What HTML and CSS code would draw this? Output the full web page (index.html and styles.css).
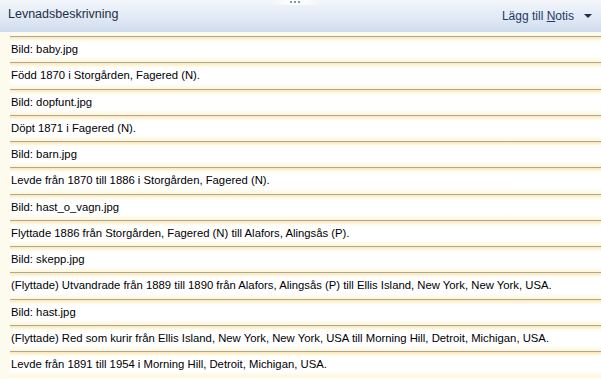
FILE: index.html
```html
<!doctype html>
<html lang="sv">
    <head>
        <meta charset="UTF-8" />
        <title>Levnadsbeskrivning</title>
        <link rel="stylesheet" href="styles.css">
    </head>
    <body>
        <div class="panel">
            <div class="header">
                <span class="grip"><i></i><i></i><i></i></span>
                <span class="title">Levnadsbeskrivning</span>
                <span class="add"><span>Lägg till <u>N</u>otis</span><span class="arrow"></span></span>
            </div>
            <ul class="notes">
                <li>Bild: baby.jpg</li>
                <li>Född 1870 i Storgården, Fagered (N).</li>
                <li>Bild: dopfunt.jpg</li>
                <li>Döpt 1871 i Fagered (N).</li>
                <li>Bild: barn.jpg</li>
                <li>Levde från 1870 till 1886 i Storgården, Fagered (N).</li>
                <li>Bild: hast_o_vagn.jpg</li>
                <li>Flyttade 1886 från Storgården, Fagered (N) till Alafors, Alingsås (P).</li>
                <li>Bild: skepp.jpg</li>
                <li>(Flyttade) Utvandrade från 1889 till 1890 från Alafors, Alingsås (P) till Ellis Island, New York, New York, USA.</li>
                <li>Bild: hast.jpg</li>
                <li>(Flyttade) Red som kurir från Ellis Island, New York, New York, USA till Morning Hill, Detroit, Michigan, USA.</li>
                <li>Levde från 1891 till 1954 i Morning Hill, Detroit, Michigan, USA.</li>
            </ul>
        </div>
    </body>
</html>
```

FILE: styles.css
```css
body {
    margin: 0;
    font-family: "Liberation Sans", Arial, sans-serif;
    background-color: #fdfbee;
    overflow: hidden;
}
.panel {
    width: 601px;
    height: 379px;
    overflow: hidden;
}
.header {
    position: relative;
    height: 32px;
    display: flex;
    align-items: center;
    justify-content: space-between;
    padding: 0 8px;
    background: linear-gradient(#f3f6fb, #e3ebf6 50%, #cfdcee);
    color: #1e2e44;
}
.title {
    font-size: 12.5px;
    margin-top: -4px;
}
.add {
    font-size: 12px;
    color: #1e3a5f;
    display: flex;
    align-items: center;
}
.arrow {
    display: inline-block;
    margin-left: 10px;
    margin-right: 1px;
    width: 0;
    height: 0;
    border-left: 4px solid transparent;
    border-right: 4px solid transparent;
    border-top: 4px solid #1e2e44;
}
.grip {
    position: absolute;
    left: 270px;
    top: 0;
    width: 50px;
    height: 5px;
    display: flex;
    justify-content: center;
    gap: 2px;
    background: linear-gradient(90deg, rgba(255,255,255,0), #fbfcfe 30%, #fbfcfe 70%, rgba(255,255,255,0));
}
.grip i {
    display: block;
    width: 2px;
    height: 2px;
    margin-top: 1px;
    background-color: #8a97a8;
}
.notes {
    list-style: none;
    margin: 4px 0 0 10px;
    padding: 0;
}
.notes li {
    height: 25.25px;
    line-height: 25px;
    border-top: 1px solid #aca899;
    padding-left: 1px;
    font-size: 11.3px;
    color: #000;
    white-space: nowrap;
    background: linear-gradient(#fde8b3, #fffdf6 4px, #ffffff 6px, #ffffff 78%, #fdf6da 100%);
}
```
